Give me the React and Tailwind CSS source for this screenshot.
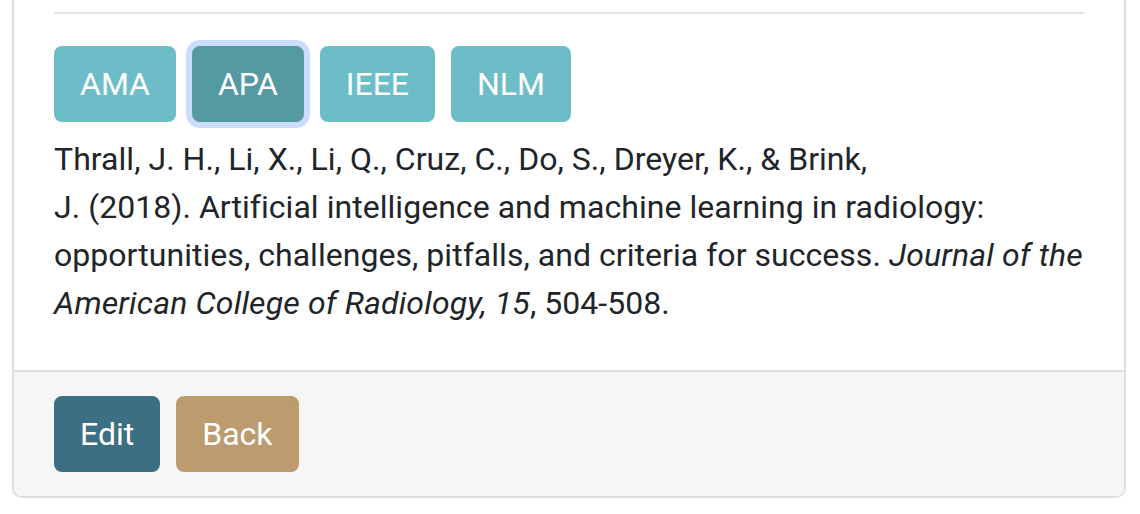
import React from 'react';

const styles = ['AMA', 'APA', 'IEEE', 'NLM'];

const StyleButton = ({ label, active }) => (
  <button
    className={`h-[76px] px-[24px] rounded-[8px] border-2 text-[32px] leading-[48px] text-white ${
      active
        ? 'bg-[#5599a3] border-[#5599a3] ring-[6px] ring-[#cddcfa]'
        : 'bg-[#6dbdc9] border-[#6dbdc9]'
    }`}
  >
    {label}
  </button>
);

export default function App() {
  return (
    <div className="min-h-[514px] bg-white font-['Roboto',sans-serif]">
      <div className="ml-[12px] w-[1114px] border-2 border-t-0 border-[#dfdfdf] rounded-b-[10px] overflow-hidden">
        <div className="px-[40px] pt-[12px] pb-[43px]">
          <div className="h-[2px] bg-[#e3e3e3]"></div>
          <div className="mt-[32px] flex gap-[16px]">
            {styles.map((s) => (
              <StyleButton key={s} label={s} active={s === 'APA'} />
            ))}
          </div>
          <p className="mt-[13px] text-[32px] leading-[48px] tracking-[0.04px] whitespace-nowrap text-[#212529]">
            Thrall, J. H., Li, X., Li, Q., Cruz, C., Do, S., Dreyer, K., &amp; Brink,
            <br />
            J. (2018). Artificial intelligence and machine learning in radiology:
            <br />
            opportunities, challenges, pitfalls, and criteria for success.{' '}
            <i className="tracking-[0.15px]">Journal of the</i>
            <br />
            <i className="tracking-[0.15px]">American College of Radiology, 15</i>, 504-508.
          </p>
        </div>
        <div className="border-t-2 border-[#dfdfdf] bg-[#f6f6f6] px-[40px] py-[24px] flex gap-[16px]">
          <button className="h-[76px] px-[24px] rounded-[8px] border-2 border-[#3d6f83] bg-[#3d6f83] text-[32px] leading-[48px] text-white">
            Edit
          </button>
          <button className="h-[76px] px-[24px] rounded-[8px] border-2 border-[#bc9b6f] bg-[#bc9b6f] text-[32px] leading-[48px] text-white">
            Back
          </button>
        </div>
      </div>
    </div>
  );
}
